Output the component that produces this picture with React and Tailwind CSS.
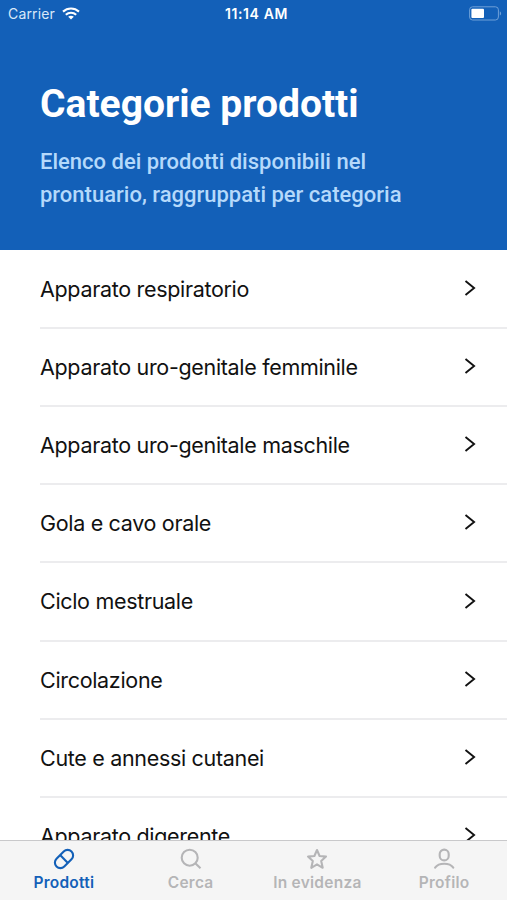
import React, { useState } from 'react';

const categories = [
  'Apparato respiratorio',
  'Apparato uro-genitale femminile',
  'Apparato uro-genitale maschile',
  'Gola e cavo orale',
  'Ciclo mestruale',
  'Circolazione',
  'Cute e annessi cutanei',
  'Apparato digerente',
];

const PillIcon = () => (
  <svg width="22" height="22" viewBox="0 0 22 22" fill="none" stroke="currentColor" strokeWidth="2.1">
    <g transform="rotate(-45 11 11)">
      <rect x="0.4" y="5.5" width="21.2" height="11" rx="5.5" />
      <path d="M11 5.5v11" />
    </g>
  </svg>
);

const SearchIcon = () => (
  <svg width="22" height="22" viewBox="0 0 22 22" fill="none" stroke="currentColor" strokeWidth="2.1">
    <circle cx="9.7" cy="9.7" r="8" />
    <path d="M15.3 15.3l5.2 5" />
  </svg>
);

const StarIcon = () => (
  <svg width="22" height="22" viewBox="0 0 22 22" fill="none" stroke="currentColor" strokeWidth="2.1" strokeLinejoin="round">
    <path d="M11 2l2.6 6 6.4.6-4.8 4.4 1.5 6.8-5.7-3.5-5.7 3.5L6.8 13 2 8.6 8.4 8z" />
  </svg>
);

const UserIcon = () => (
  <svg width="22" height="22" viewBox="0 0 22 22" fill="none" stroke="currentColor" strokeWidth="2.1" strokeLinecap="round">
    <rect x="6.7" y="1.6" width="9" height="10.8" rx="4.4" />
    <path d="M2.1 19.6c1.7-2.4 5-3.9 9.1-3.9s7.4 1.5 9.1 3.9" />
  </svg>
);

const tabs = [
  { id: 'prodotti', label: 'Prodotti', Icon: PillIcon },
  { id: 'cerca', label: 'Cerca', Icon: SearchIcon },
  { id: 'evidenza', label: 'In evidenza', Icon: StarIcon },
  { id: 'profilo', label: 'Profilo', Icon: UserIcon },
];

const StatusBar = () => (
  <div className="grid h-[27px] grid-cols-3 items-center pl-2 pr-[5px] font-['Inter',sans-serif] text-[14px] text-white">
    <div className="flex items-center gap-[7px]">
      <span className="tracking-[0.15px] text-[#d9e8f8]">Carrier</span>
      <svg width="18" height="13" viewBox="0 0 18 13" fill="none" stroke="currentColor" strokeWidth="2.1">
        <path d="M1 4.6c4.6-4.1 11.4-4.1 16 0" />
        <path d="M3.8 7.7c3-2.7 7.4-2.7 10.4 0" />
        <path d="M9 12.6L6.2 9.8c1.6-1.4 4-1.4 5.6 0z" fill="currentColor" stroke="none" />
      </svg>
    </div>
    <span className="whitespace-nowrap pl-[3px] text-center font-semibold tracking-[0.6px]">11:14 AM</span>
    <svg className="justify-self-end" width="33" height="15" viewBox="0 0 33 15">
      <rect x="0.6" y="0.8" width="28.8" height="13.2" rx="3" fill="none" stroke="#6fa0d8" strokeWidth="1" />
      <rect x="2.4" y="2.7" width="12.6" height="9.4" rx="1" fill="#fff" />
      <path d="M30.8 5.2c1.8.8 1.8 3.6 0 4.4z" fill="#6fa0d8" />
    </svg>
  </div>
);

const CategoryRow = ({ name }) => (
  <button className="ml-10 flex h-[78.2px] shrink-0 items-center justify-between border-b-2 border-[#ececee] pr-[31px] text-left">
    <span className="text-[21.5px] tracking-[-0.32px] text-[#111]">{name}</span>
    <svg className="mb-[2px]" width="12" height="16" viewBox="0 0 12 16" fill="none" stroke="#111" strokeWidth="1.9">
      <path d="M1.5 1l8.6 7-8.6 7" />
    </svg>
  </button>
);

const App = () => {
  const [activeTab, setActiveTab] = useState('prodotti');

  return (
    <div className="flex h-[900px] w-[507px] flex-col overflow-hidden bg-white font-['Inter',sans-serif]">
      <header className="h-[250px] shrink-0 bg-[#1360b8]">
        <StatusBar />
        <div className="px-10 pt-[51px] font-['Roboto',sans-serif]">
          <h1 className="text-[39px] font-bold leading-[52px] text-white">Categorie prodotti</h1>
          <p className="mt-[15px] text-[22px] font-medium leading-[33px] text-[#b5d9fb]">
            Elenco dei prodotti disponibili nel
            <br />
            prontuario, raggruppati per categoria
          </p>
        </div>
      </header>

      <main className="flex min-h-0 flex-1 flex-col overflow-hidden pt-[0.7px]">
        {categories.map((name) => (
          <CategoryRow key={name} name={name} />
        ))}
      </main>

      {/* Tab Bar */}
      <nav className="grid h-[60px] shrink-0 grid-cols-4 border-t border-[#c9c9cb] bg-[#f5f5f5]">
        {tabs.map(({ id, label, Icon }) => (
          <button
            key={id}
            onClick={() => setActiveTab(id)}
            className={`flex flex-col items-center pl-px pt-[7px] ${
              activeTab === id ? 'text-[#1360b8]' : 'text-[#b5b5b7]'
            }`}
          >
            <Icon />
            <span className="mt-[3px] whitespace-nowrap text-[15.5px] font-semibold leading-5 tracking-[0.25px]">{label}</span>
          </button>
        ))}
      </nav>
    </div>
  );
};

export default App;
